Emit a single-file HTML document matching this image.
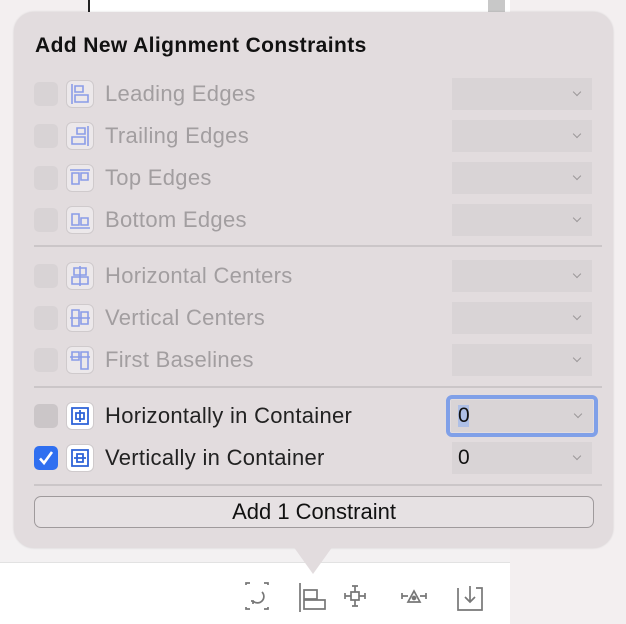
<!DOCTYPE html>
<html><head><style>
*{margin:0;padding:0;box-sizing:border-box}
body{width:626px;height:624px;position:relative;overflow:hidden;background:#f3eff0;font-family:"Liberation Sans",sans-serif}
.abs{position:absolute}
.pop{left:14px;top:12px;width:599px;height:536px;background:#e2dcde;border-radius:20px;box-shadow:0 0 2px rgba(0,0,0,.15)}
.title{left:35px;top:34px;font-size:21px;letter-spacing:0.4px;font-weight:bold;color:#111}
.cb{width:24px;height:24px;border-radius:5px;background:#d8d3d5;left:34px}
.ic{width:28px;height:28px;border-radius:6px;border:1.5px solid #cfcacc;background:#ece8ea;left:66px}
.ic svg{position:absolute;left:2px;top:2px}
.lbl{left:105px;font-size:22px;line-height:24px;letter-spacing:0.3px;color:#a29ea0}
.dd{left:452px;width:140px;height:32px;background:#d9d4d6}
.dd:after{content:"";position:absolute;right:12px;top:11px;width:5px;height:5px;border-right:1.7px solid #9c989a;border-bottom:1.7px solid #9c989a;transform:rotate(45deg)}
.sep{left:34px;width:568px;height:2px;background:#cbc6c8}
</style></head><body>
<div class="abs" style="left:88px;top:0;width:392px;height:540px;background:#fff;border-left:2px solid #222"></div>
<div class="abs" style="left:480px;top:0;width:30px;height:20px;background:#fff"></div>
<div class="abs" style="left:488px;top:0;width:17px;height:14px;background:#c8c8c8"></div>
<div class="abs" style="left:0;top:540px;width:510px;height:84px;background:#fff"></div>
<div class="abs" style="left:0;top:540px;width:510px;height:23px;background:#f3f1f2;border-bottom:1px solid #e2e2e2"></div>
<div class="abs pop"></div>
<div class="abs" style="left:293px;top:546px;width:0;height:0;border-left:20px solid transparent;border-right:20px solid transparent;border-top:28px solid #e2dcde"></div>
<div class="abs title">Add New Alignment Constraints</div>

<div class="abs cb" style="top:82px"></div><div class="abs ic" style="top:80px"><svg width="22" height="22" stroke="#8a9ce8" fill="none" stroke-width="1.6"><path d="M3 1v20M6 3h8v6H6zM6 12h13v7H6z"/></svg></div><div class="abs lbl" style="top:82px">Leading Edges</div><div class="abs dd" style="top:78px"></div>
<div class="abs cb" style="top:124px"></div><div class="abs ic" style="top:122px"><svg width="22" height="22" stroke="#8a9ce8" fill="none" stroke-width="1.6"><path d="M19 1v20M8 3h8v6H8zM3 12h13v7H3z"/></svg></div><div class="abs lbl" style="top:124px">Trailing Edges</div><div class="abs dd" style="top:120px"></div>
<div class="abs cb" style="top:166px"></div><div class="abs ic" style="top:164px"><svg width="22" height="22" stroke="#8a9ce8" fill="none" stroke-width="1.6"><path d="M1 3h20M3 6h7v11H3zM12 6h7v7h-7z"/></svg></div><div class="abs lbl" style="top:166px">Top Edges</div><div class="abs dd" style="top:162px"></div>
<div class="abs cb" style="top:208px"></div><div class="abs ic" style="top:206px"><svg width="22" height="22" stroke="#8a9ce8" fill="none" stroke-width="1.6"><path d="M1 19h20M3 5h7v11H3zM12 9h7v7h-7z"/></svg></div><div class="abs lbl" style="top:208px">Bottom Edges</div><div class="abs dd" style="top:204px"></div>
<div class="abs sep" style="top:245px"></div>
<div class="abs cb" style="top:264px"></div><div class="abs ic" style="top:262px"><svg width="22" height="22" stroke="#8a9ce8" fill="none" stroke-width="1.6"><path d="M11 1v20M5 3h12v7H5zM3 12h16v7H3z"/></svg></div><div class="abs lbl" style="top:264px">Horizontal Centers</div><div class="abs dd" style="top:260px"></div>
<div class="abs cb" style="top:306px"></div><div class="abs ic" style="top:304px"><svg width="22" height="22" stroke="#8a9ce8" fill="none" stroke-width="1.6"><path d="M1 11h20M3 3h7v16H3zM12 5h7v12h-7z"/></svg></div><div class="abs lbl" style="top:306px">Vertical Centers</div><div class="abs dd" style="top:302px"></div>
<div class="abs cb" style="top:348px"></div><div class="abs ic" style="top:346px"><svg width="22" height="22" stroke="#8a9ce8" fill="none" stroke-width="1.6"><path d="M1 8h20M3 3h7v8H3zM12 3h7v17h-7z"/></svg></div><div class="abs lbl" style="top:348px">First Baselines</div><div class="abs dd" style="top:344px"></div>
<div class="abs sep" style="top:386px"></div>
<div class="abs cb" style="top:404px;background:#cbc6c8"></div><div class="abs ic" style="top:402px;background:#fff"><svg width="22" height="22" stroke="#2d62d8" fill="none" stroke-width="1.8"><path d="M3 3h16v16H3zM11 5v12M7 8h8v6H7z"/></svg></div><div class="abs lbl" style="top:404px;color:#222">Horizontally in Container</div>
<div class="abs" style="left:446px;top:395px;width:152px;height:42px;border:4px solid #80a0e8;border-radius:6px"></div>
<div class="abs dd" style="top:400px;left:451px;width:142px;height:32px;background:#d9d4d6"></div>
<div class="abs" style="left:458px;top:405px;width:11px;height:22px;background:#aebfe6"></div>
<div class="abs" style="left:458px;top:404px;font-size:21px;line-height:24px;color:#111">0</div>
<div class="abs cb" style="top:446px;background:#2f6ff0"><svg width="24" height="24" style="position:absolute;left:0;top:0"><path d="M6 12.5l4 4.5 8-11" stroke="#fff" stroke-width="2.6" fill="none"/></svg></div>
<div class="abs ic" style="top:444px;background:#fff"><svg width="22" height="22" stroke="#2d62d8" fill="none" stroke-width="1.8"><path d="M3 3h16v16H3zM5 11h12M8 7h6v8H8z"/></svg></div><div class="abs lbl" style="top:446px;color:#222">Vertically in Container</div>
<div class="abs dd" style="top:442px"></div>
<div class="abs" style="left:458px;top:446px;font-size:21px;line-height:24px;color:#111">0</div>
<div class="abs sep" style="top:484px"></div>
<div class="abs" style="left:34px;top:496px;width:560px;height:32px;border:1.5px solid #9f9a9c;border-radius:7px;background:#e6e1e3;text-align:center;font-size:22px;line-height:29px;color:#111">Add 1 Constraint</div>

<svg class="abs" style="left:240px;top:580px" width="260" height="40" fill="none" stroke="#777" stroke-width="1.7">
<path d="M6 5v-2h4M24 3h4v2M6 27v2h4M24 29h4v-2"/>
<path d="M22 12a6 6 0 1 1-9 9M11 21l2 0 0 3"/>
<path d="M60 3v29M64 10h13v9H64zM64 20h21v9H64z"/>
<path d="M112 6h6M115 6v6M111 12h8v8h-8zM115 20v6M112 26h6M105 13v6M105 16h6M125 13v6M119 16h6"/>
<path d="M162 13v6M162 16h6M186 13v6M180 16h6M168 22l6-11 6 11z"/>
<circle cx="174" cy="18" r="1.5" fill="#777"/>
<path d="M218 8v22h24V8h-6M230 6v16M225 17l5 5 5-5"/>
</svg>
</body></html>
